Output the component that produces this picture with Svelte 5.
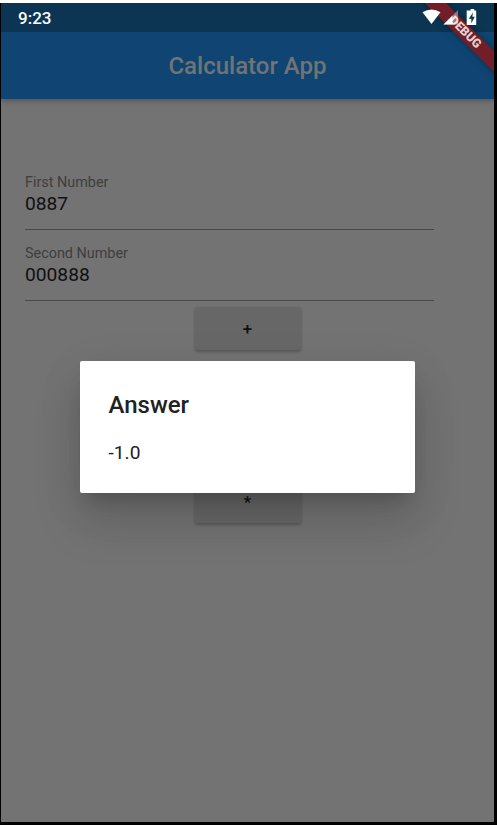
<script>
  const fields = [
    { label: 'First Number', value: '0887' },
    { label: 'Second Number', value: '000888' }
  ];
</script>

<div class="frame">
  <div class="screen">
    <header>
      <div class="status">
        <span class="time">9:23</span>
      </div>
      <div class="bar"><h1>Calculator App</h1></div>
    </header>
    <main>
      {#each fields as field}
        <div class="field">
          <span class="label">{field.label}</span>
          <span class="value">{field.value}</span>
        </div>
      {/each}
      <div class="actions">
        <button>+</button>
        <button>*</button>
      </div>
    </main>
    <div class="dialog" role="dialog">
      <h2>Answer</h2>
      <p>-1.0</p>
    </div>
    <div class="ribbon">DEBUG</div>
    <svg class="icons" width="56" height="24" viewBox="0 0 56 24">
      <path d="M.5 9.2Q9.5 3.8 18.5 9.2L9.5 21Z" fill="#fff" />
      <path d="M36 7V21.5H21.5Z" fill="#fff" fill-opacity=".38" />
      <path d="M30.5 12.5V21.5H21.5Z" fill="#fff" />
      <path fill-rule="evenodd" d="M46.9 7.5h1.7V6h3.6v1.5h2V22H44.7V7.5ZM51 9.5L46.8 15.7h2.5V20.3L52.8 13.7h-2.5Z" fill="#fff" />
    </svg>
  </div>
</div>

<style>
  .frame {
    box-sizing: border-box;
    width: 497px;
    height: 825px;
    background: #000;
    border-top: 3px solid #fff;
    padding: 0 3px 3px 1px;
    font-family: Roboto, sans-serif;
  }
  .screen {
    position: relative;
    height: 819px;
    overflow: hidden;
    background: #737373;
  }
  header {
    position: relative;
    background: #104573;
    box-shadow: 0 2px 5px rgba(0, 0, 0, .28);
  }
  .status {
    box-sizing: border-box;
    height: 29px;
    background: #0c3453;
    padding-left: 17px;
  }
  .time {
    color: #fff;
    font-size: 17px;
    font-weight: 500;
    line-height: 31px;
  }
  .icons {
    position: absolute;
    right: 15.7px;
    top: 0;
  }
  .bar {
    height: 67px;
    display: flex;
    align-items: center;
    justify-content: center;
  }
  h1 {
    margin: 0;
    color: #737373;
    font-size: 24px;
    font-weight: 500;
    line-height: 28px;
  }
  main { padding: 73px 60px 0 24px; }
  .field {
    box-sizing: border-box;
    height: 71px;
    padding-top: 12px;
    display: flex;
    flex-direction: column;
    border-bottom: 1px solid #484848;
    color: #101010;
  }
  .field:first-child {
    height: 58px;
    padding-top: 0;
  }
  .label {
    color: #3e3e3e;
    font-size: 14.4px;
    line-height: 21px;
  }
  .field + .field .label { line-height: 23px; }
  .field + .field .value { line-height: 20px; }
  .value {
    font-size: 19.2px;
    line-height: 22px;
  }
  .actions {
    display: flex;
    flex-direction: column;
    align-items: center;
    gap: 130px;
    padding: 6px 0 0 37px;
  }
  button {
    width: 106px;
    height: 43px;
    padding: 0 1px 0 0;
    border: 0;
    border-radius: 2px;
    background: #676767;
    box-shadow: 0 2px 3px rgba(0, 0, 0, .2), 0 0 2px rgba(0, 0, 0, .12);
    color: #101010;
    font: 500 16.8px/42px Roboto, sans-serif;
  }
  .dialog {
    position: absolute;
    left: 79px;
    top: 358px;
    box-sizing: border-box;
    width: 335px;
    height: 132px;
    padding: 30px 28.5px;
    border-radius: 2px;
    background: #fff;
    color: #212121;
    box-shadow: 0 13px 18px -8px rgba(0, 0, 0, .2), 0 29px 46px 4px rgba(0, 0, 0, .12), 0 11px 50px 4px rgba(0, 0, 0, .05);
  }
  h2 {
    margin: 0;
    font-size: 24px;
    font-weight: 500;
    line-height: 29px;
  }
  p {
    margin: 21px 0 0;
    font-size: 19.2px;
    line-height: 24px;
  }
  .ribbon {
    position: absolute;
    right: -56px;
    top: 21.5px;
    width: 170px;
    height: 15px;
    transform: rotate(45deg);
    background: #721e29;
    box-shadow: 0 0 7px rgba(0, 0, 0, .4);
    color: #e3d0d2;
    font-size: 12.3px;
    font-weight: 900;
    line-height: 14px;
    text-align: center;
  }
</style>
